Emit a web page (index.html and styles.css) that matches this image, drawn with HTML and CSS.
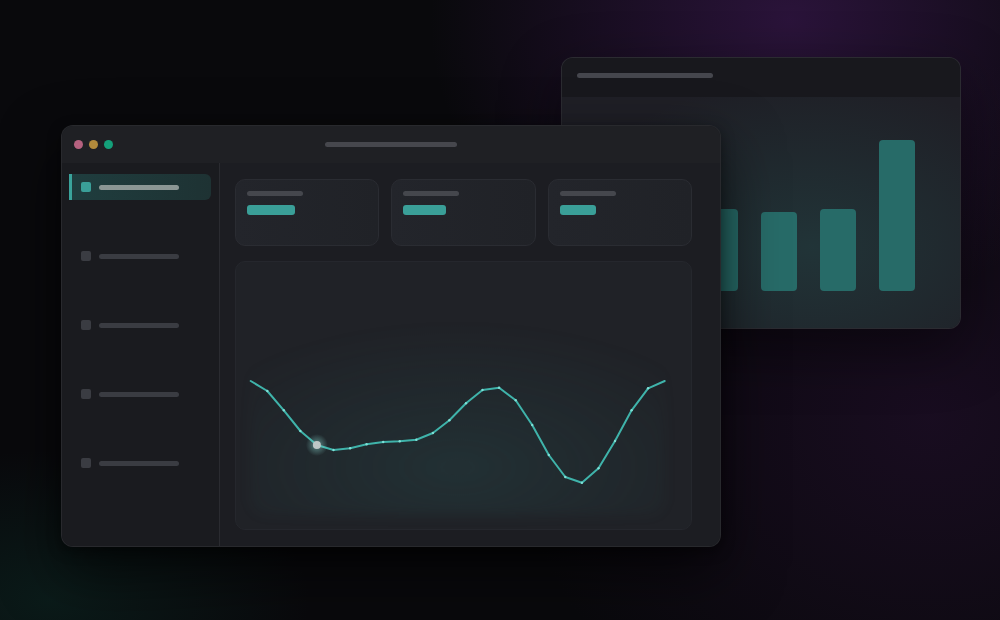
FILE: index.html
```html
<!DOCTYPE html>
<html>
<head>
<meta charset="utf-8">
<link rel="stylesheet" href="styles.css">
</head>
<body>
<div class="scene">
  <div class="win back">
    <div class="back-title"><span class="ph ph-title-back"></span></div>
    <div class="back-body">
      <div class="bars">
        <div class="bar" style="height:82px"></div>
        <div class="bar" style="height:82px"></div>
        <div class="bar" style="height:79px"></div>
        <div class="bar" style="height:82px"></div>
        <div class="bar" style="height:151px"></div>
      </div>
    </div>
  </div>

  <div class="win front">
    <div class="titlebar">
      <div class="lights">
        <span class="dot red"></span><span class="dot yellow"></span><span class="dot green"></span>
      </div>
      <span class="ph ph-title"></span>
    </div>
    <div class="body">
      <aside class="sidebar">
        <div class="nav-item active"><span class="nav-icon"></span><span class="nav-label"></span></div>
        <div class="nav-item"><span class="nav-icon"></span><span class="nav-label"></span></div>
        <div class="nav-item"><span class="nav-icon"></span><span class="nav-label"></span></div>
        <div class="nav-item"><span class="nav-icon"></span><span class="nav-label"></span></div>
        <div class="nav-item"><span class="nav-icon"></span><span class="nav-label"></span></div>
      </aside>
      <main class="main">
        <div class="stats">
          <div class="stat"><span class="stat-label"></span><span class="stat-value" style="width:48px"></span></div>
          <div class="stat"><span class="stat-label"></span><span class="stat-value" style="width:43px"></span></div>
          <div class="stat"><span class="stat-label"></span><span class="stat-value" style="width:36px"></span></div>
        </div>
        <div class="chart">
          <div class="chart-glow"></div>
          <svg class="chart-svg" viewBox="0 0 457 270" width="457" height="270">
            <defs>
              <radialGradient id="halo">
                <stop offset="0" stop-color="#8fe0d8" stop-opacity="0.55"/>
                <stop offset="1" stop-color="#8fe0d8" stop-opacity="0"/>
              </radialGradient>
            </defs>
            <polyline fill="none" stroke="#3fb3aa" stroke-width="2" stroke-linejoin="round" stroke-linecap="round"
              points="15.7,120 32.3,130 48.8,149.3 65.4,170 81.9,184 98.5,189 115.1,187.3 131.6,183.3 148.2,181 164.7,180.3 181.3,178.7 197.9,172 214.4,159.3 231,142.3 247.5,129 264.1,126.7 280.7,139.3 297.2,164 313.8,194 330.3,216 346.9,221.7 363.5,207.3 380,180 396.6,149.3 413.1,127.3 429.7,120"/>
            <g fill="#7fe0d6">
              <circle cx="32.3" cy="130" r="1.2"/><circle cx="48.8" cy="149.3" r="1.2"/><circle cx="65.4" cy="170" r="1.2"/>
              <circle cx="98.5" cy="189" r="1.2"/><circle cx="115.1" cy="187.3" r="1.2"/><circle cx="131.6" cy="183.3" r="1.2"/>
              <circle cx="148.2" cy="181" r="1.2"/><circle cx="164.7" cy="180.3" r="1.2"/><circle cx="181.3" cy="178.7" r="1.2"/>
              <circle cx="197.9" cy="172" r="1.2"/><circle cx="214.4" cy="159.3" r="1.2"/><circle cx="231" cy="142.3" r="1.2"/>
              <circle cx="247.5" cy="129" r="1.2"/><circle cx="264.1" cy="126.7" r="1.2"/><circle cx="280.7" cy="139.3" r="1.2"/>
              <circle cx="297.2" cy="164" r="1.2"/><circle cx="313.8" cy="194" r="1.2"/><circle cx="330.3" cy="216" r="1.2"/>
              <circle cx="346.9" cy="221.7" r="1.2"/><circle cx="363.5" cy="207.3" r="1.2"/><circle cx="380" cy="180" r="1.2"/>
              <circle cx="396.6" cy="149.3" r="1.2"/><circle cx="413.1" cy="127.3" r="1.2"/>
            </g>
            <circle cx="81.9" cy="184" r="11" fill="url(#halo)"/>
            <circle cx="81.9" cy="184" r="4" fill="#bfc7c6"/>
          </svg>
        </div>
      </main>
    </div>
  </div>
</div>
</body>
</html>
```
FILE: styles.css
```css
* { box-sizing: border-box; }
html, body { margin: 0; padding: 0; }
body {
  width: 1000px;
  height: 620px;
  overflow: hidden;
  font-family: "Inter", "Liberation Sans", sans-serif;
  background:
    radial-gradient(ellipse 360px 300px at 790px 20px, rgba(70, 28, 96, 0.55), rgba(70, 28, 96, 0) 100%),
    radial-gradient(ellipse 420px 360px at 930px 420px, rgba(40, 16, 52, 0.5), rgba(40, 16, 52, 0) 100%),
    radial-gradient(ellipse 260px 150px at 50px 600px, rgba(14, 60, 50, 0.35), rgba(14, 60, 50, 0) 100%),
    #09090c;
}
.scene { position: relative; width: 1000px; height: 620px; }

.win {
  position: absolute;
  border-radius: 12px;
  border: 1px solid rgba(255, 255, 255, 0.06);
  overflow: hidden;
}

/* back window */
.back {
  left: 561px; top: 57px; width: 400px; height: 272px;
  background: #1e1e25;
  box-shadow: 0 20px 60px rgba(0, 0, 0, 0.45);
  display: flex; flex-direction: column;
}
.back-title {
  height: 39px;
  background: #18181d;
  padding: 15px 0 0 15px;
}
.ph { display: block; height: 5px; border-radius: 3px; background: #45464d; }
.ph-title-back { width: 136px; }
.back-body {
  flex: 1;
  background: radial-gradient(ellipse 260px 170px at 250px 150px, rgba(38, 100, 96, 0.3), rgba(38, 100, 96, 0) 100%), #1f1f26;
  display: flex; justify-content: flex-end; align-items: flex-end;
  padding: 0 45px 37px 0;
}
.bars { display: flex; align-items: flex-end; gap: 23px; }
.bar { width: 36px; border-radius: 4px; background: #276b68; }

/* front window */
.front {
  left: 61px; top: 125px; width: 660px; height: 422px;
  background: #1b1c20;
  box-shadow: 0 24px 60px rgba(0, 0, 0, 0.6), 0 4px 14px rgba(0, 0, 0, 0.4);
  display: flex; flex-direction: column;
}
.titlebar {
  height: 37px;
  flex: none;
  background: #1f2024;
  display: flex; align-items: center;
  padding: 0 0 0 12px;
}
.lights { display: flex; gap: 6px; }
.dot { width: 9px; height: 9px; border-radius: 50%; display: block; }
.red { background: #b5617f; }
.yellow { background: #b28a3c; }
.green { background: #14a07a; }
.ph-title { width: 132px; margin-left: 212px; background: #46474d; }

.body { flex: 1; display: flex; }
.sidebar {
  width: 158px; flex: none;
  background: #1a1b1f;
  border-right: 1px solid #2a2b30;
  padding: 11px 8px 0 7px;
  display: flex; flex-direction: column; gap: 43px;
}
.nav-item {
  height: 26px;
  display: flex; align-items: center;
  padding-left: 12px;
  gap: 8px;
  border-radius: 6px;
}
.nav-item.active {
  background: linear-gradient(90deg, #1f3d3e, #1e3233);
  border-left: 3px solid #3aa39b;
  border-radius: 0 6px 6px 0;
  padding-left: 9px;
}
.nav-icon { width: 10px; height: 10px; border-radius: 2px; background: #3a3c42; display: block; }
.nav-label { width: 80px; height: 5px; border-radius: 3px; background: #3a3c42; display: block; }
.active .nav-icon { background: #3a9f98; }
.active .nav-label { background: #8b9694; }

.main {
  flex: 1;
  background: #1c1d22;
  padding: 16px 28px 16px 15px;
  display: flex; flex-direction: column; gap: 15px;
}
.stats { display: grid; grid-template-columns: repeat(3, 1fr); gap: 12px; }
.stat {
  height: 67px;
  border-radius: 10px;
  border: 1px solid #2a2c32;
  background: linear-gradient(90deg, #23252b, #202227);
  padding: 11px 11px;
  display: flex; flex-direction: column; gap: 9px;
}
.stat-label { width: 56px; height: 5px; border-radius: 3px; background: #45474d; display: block; }
.stat-value { height: 10px; border-radius: 3px; background: #3a9f98; display: block; }

.chart {
  flex: 1;
  border-radius: 10px;
  border: 1px solid #25272d;
  background: #202227;
  overflow: hidden;
  position: relative;
}
.chart-glow {
  position: absolute;
  left: 14px; right: 26px; top: 14px; bottom: 14px;
  border-radius: 16px;
  background: radial-gradient(ellipse 70% 60% at 50% 80%, rgba(42, 100, 100, 0.22), rgba(42, 100, 100, 0) 100%);
  filter: blur(6px);
}
.chart-svg { display: block; position: absolute; left: -1px; top: -1px; }
```
